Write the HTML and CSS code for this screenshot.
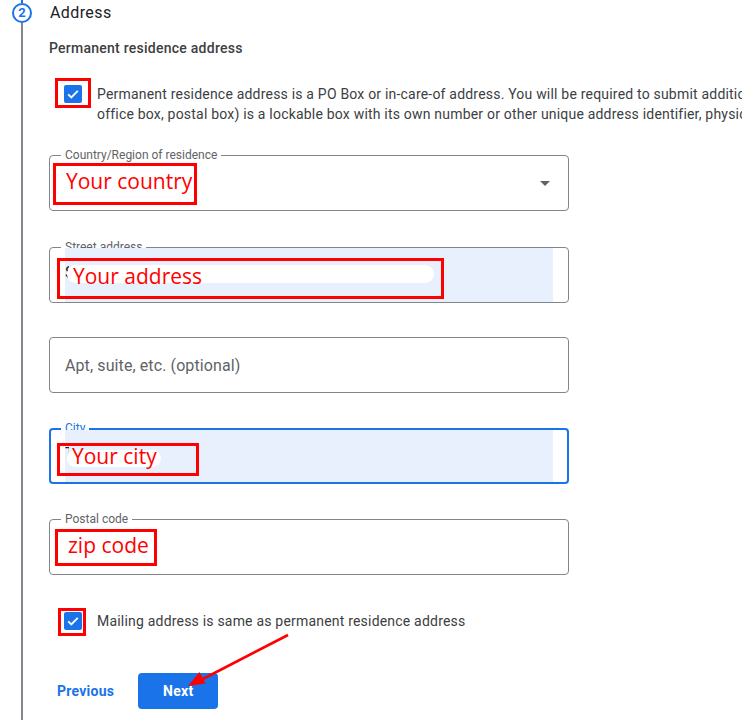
FILE: index.html
```html
<!DOCTYPE html>
<html>
<head>
<meta charset="utf-8">
<link rel="stylesheet" href="styles.css">
</head>
<body>
<div class="page">
  <div class="rail">
    <div class="rail-top"></div>
    <div class="step-num">2</div>
    <div class="rail-line"></div>
  </div>
  <div class="content">
    <div class="title">Address</div>
    <div class="subtitle">Permanent residence address</div>

    <div class="check-row first">
      <div class="check-wrap">
        <span class="checkbox"><svg viewBox="0 0 18 18" width="18" height="18"><path d="M4.2 9.3l3.1 3.1 6.5-6.6" fill="none" stroke="#fff" stroke-width="1.9"/></svg></span>
        <span class="mark mark-cb1"></span>
      </div>
      <div class="check-text">Permanent residence address is a PO Box or in-care-of address. You will be required to submit additional documentation. A PO Box (post<br>office box, postal box) is a lockable box with its own number or other unique address identifier, physically located at a post office.</div>
    </div>

    <div class="field country">
      <span class="label">Country/Region of residence</span>
      <div class="input"></div>
      <svg class="caret" width="10" height="5" viewBox="0 0 10 5"><path d="M0 0h10L5 5z" fill="#5f6368"/></svg>
      <span class="mark note note-country">Your country</span>
    </div>

    <div class="field street autofill">
      <span class="label">Street address</span>
      <div class="input"><span class="peek">S</span><span class="pill pill-street"></span></div>
      <span class="mark note note-street">Your address</span>
    </div>

    <div class="field apt">
      <div class="input"><span class="placeholder">Apt, suite, etc. (optional)</span></div>
    </div>

    <div class="field city autofill focused">
      <span class="label">City</span>
      <div class="input"><span class="peek">T</span><span class="pill pill-city"></span></div>
      <span class="mark note note-city">Your city</span>
    </div>

    <div class="field postal">
      <span class="label">Postal code</span>
      <div class="input"></div>
      <span class="mark note note-postal">zip code</span>
    </div>

    <div class="check-row second">
      <div class="check-wrap">
        <span class="checkbox"><svg viewBox="0 0 18 18" width="18" height="18"><path d="M4.2 9.3l3.1 3.1 6.5-6.6" fill="none" stroke="#fff" stroke-width="1.9"/></svg></span>
        <span class="mark mark-cb2"></span>
      </div>
      <div class="check-text">Mailing address is same as permanent residence address</div>
    </div>

    <div class="actions">
      <button class="btn-text">Previous</button>
      <button class="btn-primary">Next</button>
    </div>
  </div>
</div>
<svg class="arrow" width="742" height="720" viewBox="0 0 742 720">
  <line x1="288" y1="635" x2="200" y2="680.5" stroke="#f00" stroke-width="2.6"/>
  <polygon points="188,686 205.5,683.5 199.5,672" fill="#f00"/>
</svg>
</body>
</html>
```
FILE: styles.css
```css
html, body {
  margin: 0;
  padding: 0;
  background: #fff;
  overflow: hidden;
}
body {
  width: 742px;
  height: 720px;
  position: relative;
  font-family: Roboto, "Liberation Sans", Arial, sans-serif;
  color: #3c4043;
}
.page {
  display: flex;
  height: 720px;
}
.rail {
  width: 44px;
  flex: none;
  display: flex;
  flex-direction: column;
  align-items: center;
}
.rail-top {
  width: 2px;
  height: 3px;
  background: #1a73e8;
}
.step-num {
  width: 20px;
  height: 20px;
  box-sizing: border-box;
  border: 2px solid #1a73e8;
  border-radius: 50%;
  color: #1a73e8;
  font-size: 13px;
  font-weight: 700;
  line-height: 16px;
  text-align: center;
}
.rail-line {
  flex: 1;
  width: 2px;
  background: #80868b;
}
.content {
  flex: 1;
  padding-left: 5px;
  min-width: 0;
}
.title {
  margin-top: 1px;
  font-size: 16px;
  line-height: 24px;
  letter-spacing: 0.4px;
  color: #202124;
  padding-left: 1px;
}
.subtitle {
  margin-top: 13px;
  font-size: 14px;
  line-height: 20px;
  letter-spacing: 0.25px;
  font-weight: 500;
  color: #3c4043;
}
.check-row {
  display: flex;
  align-items: flex-start;
  padding-left: 15px;
}
.check-row.first {
  margin-top: 26px;
}
.check-row.second {
  margin-top: 36px;
  align-items: center;
}
.check-wrap {
  position: relative;
  width: 18px;
  height: 18px;
  flex: none;
  margin-top: 1px;
}
.check-row.second .check-wrap {
  margin-top: 0;
}
.checkbox {
  display: block;
  width: 18px;
  height: 18px;
  border-radius: 2px;
  background: #1a73e8;
}
.checkbox svg {
  display: block;
}
.check-text {
  margin-left: 15px;
  font-size: 14px;
  line-height: 20px;
  letter-spacing: 0.2px;
  white-space: nowrap;
  color: #3c4043;
}
.mark {
  position: absolute;
  box-sizing: border-box;
  border: 3px solid #f00;
}
.mark-cb1 {
  left: -9px;
  top: -7px;
  width: 36px;
  height: 30px;
}
.mark-cb2 {
  left: -6px;
  top: -4px;
  width: 28px;
  height: 28px;
}
.field {
  position: relative;
  width: 520px;
  height: 56px;
  box-sizing: border-box;
  border: 1px solid #80868b;
  border-radius: 4px;
  display: flex;
  padding: 0 15px;
  margin-top: 35px;
}
.field.country {
  margin-top: 31px;
}
.field.street {
  margin-top: 36px;
}
.field.apt {
  margin-top: 34px;
}
.field.focused {
  border: 2px solid #1a73e8;
  padding: 0 14px;
}
.label {
  position: absolute;
  top: -8px;
  left: 11px;
  padding: 0 4px;
  background: #fff;
  font-size: 12px;
  line-height: 14px;
  color: #5f6368;
}
.focused .label {
  top: -9px;
  left: 10px;
  color: #1a73e8;
}
.input {
  flex: 1;
  display: flex;
  align-items: center;
  position: relative;
}
.autofill .input {
  background: #e8f0fe;
}
.peek {
  width: 4px;
  overflow: hidden;
  font-size: 16px;
  line-height: 18px;
  color: #202124;
  margin-top: -4px;
}
.placeholder {
  font-size: 16px;
  letter-spacing: 0.1px;
  color: #5f6368;
}
.pill {
  position: absolute;
  background: #fff;
  border-radius: 9px;
}
.pill-street {
  left: 2px;
  top: 17px;
  width: 367px;
  height: 18px;
}
.pill-city {
  left: 2px;
  top: 20px;
  width: 94px;
  height: 17px;
}
.caret {
  position: absolute;
  right: 18px;
  top: 25px;
}
.note {
  display: flex;
  align-items: center;
  font-family: "Open Sans", "Noto Sans", sans-serif;
  font-size: 21px;
  color: #f00;
  white-space: nowrap;
  padding-bottom: 6px;
}
.note-country {
  left: 3px;
  top: 7px;
  width: 144px;
  height: 42px;
  padding-left: 10px;
}
.note-street {
  left: 7px;
  top: 10px;
  width: 387px;
  height: 41px;
  padding-left: 13px;
}
.note-city {
  left: 6px;
  top: 13px;
  width: 142px;
  height: 33px;
  padding-left: 12px;
  padding-bottom: 7px;
}
.note-postal {
  left: 5px;
  top: 9px;
  width: 102px;
  height: 37px;
  padding-left: 10px;
}
.actions {
  margin-top: 42px;
  display: flex;
  align-items: center;
  gap: 16px;
}
.btn-text {
  border: none;
  background: none;
  padding: 0 8px;
  height: 36px;
  font-family: Roboto, "Liberation Sans", sans-serif;
  font-size: 14px;
  font-weight: 700;
  letter-spacing: 0.25px;
  color: #1a73e8;
}
.btn-primary {
  width: 80px;
  height: 36px;
  border: none;
  border-radius: 4px;
  background: #1a73e8;
  color: #fff;
  font-family: Roboto, "Liberation Sans", sans-serif;
  font-size: 14px;
  font-weight: 700;
  letter-spacing: 0.25px;
}
.arrow {
  position: absolute;
  left: 0;
  top: 0;
  pointer-events: none;
}
```
